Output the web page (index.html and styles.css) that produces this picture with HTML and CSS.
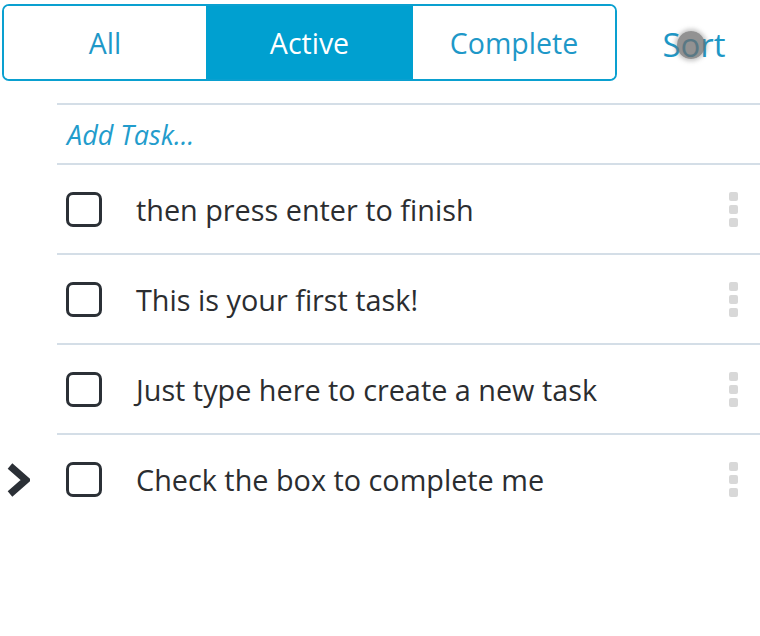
FILE: index.html
```html
<!DOCTYPE html>
<html lang="en">

<head>
    <meta charset="UTF-8">
    <meta name="viewport" content="width=device-width, initial-scale=1.0">
    <title>Tasks</title>
    <link rel="stylesheet" href="styles.css">
</head>

<body>

    <div class="toolbar">
        <div class="filter-group">
            <button class="filter">All</button>
            <button class="filter selected">Active</button>
            <button class="filter">Complete</button>
        </div>
        <div class="sort-wrap">
            <span class="sort">Sort</span>
            <span class="touch-dot"></span>
        </div>
    </div>

    <ul class="task-list">
        <li class="add-task">Add Task...</li>
        <li class="task">
            <span class="checkbox"></span>
            <span class="task-text">then press enter to finish</span>
            <span class="handle"><i></i><i></i><i></i></span>
        </li>
        <li class="task">
            <span class="checkbox"></span>
            <span class="task-text">This is your first task!</span>
            <span class="handle"><i></i><i></i><i></i></span>
        </li>
        <li class="task">
            <span class="checkbox"></span>
            <span class="task-text">Just type here to create a new task</span>
            <span class="handle"><i></i><i></i><i></i></span>
        </li>
        <li class="task current">
            <svg class="pointer" width="24" height="36" viewBox="0 0 24 36">
                <path d="M4 4 L20 18 L4 32" fill="none" stroke="#2b3036" stroke-width="7" stroke-linejoin="miter" />
            </svg>
            <span class="checkbox"></span>
            <span class="task-text">Check the box to complete me</span>
            <span class="handle"><i></i><i></i><i></i></span>
        </li>
    </ul>

</body>

</html>
```

FILE: styles.css
```css
/* Global Styles */
body {
    font-family: 'Open Sans', 'Liberation Sans', sans-serif;
    background-color: #fff;
    margin: 0;
    padding: 0;
}

/* Toolbar */
.toolbar {
    display: flex;
    align-items: center;
    padding: 4px 0 0 2px;
}

.filter-group {
    display: flex;
    width: 615px;
    height: 77px;
    box-sizing: border-box;
    border: 2px solid #0aa0d0;
    border-radius: 7px;
    overflow: hidden;
}

.filter {
    flex: 1;
    border: none;
    background-color: #fff;
    color: #1e98c8;
    font-family: inherit;
    font-size: 28.5px;
    padding: 0;
    cursor: pointer;
}

.filter.selected {
    flex: 0 0 207px;
    background-color: #00a0d0;
    color: #fff;
}

.sort-wrap {
    flex: 1;
    position: relative;
    text-align: center;
    padding: 10px 0 0 11px;
    line-height: 45px;
}

.sort {
    font-size: 33px;
    color: #1d97c6;
}

.touch-dot {
    position: absolute;
    left: 60px;
    top: 19px;
    width: 28px;
    height: 28px;
    border-radius: 50%;
    background-color: rgba(110, 110, 110, 0.75);
    box-shadow: 0 0 4px 2px rgba(110, 110, 110, 0.4);
}

/* Task List */
.task-list {
    list-style: none;
    margin: 22px 0 0 57px;
    padding: 0;
    border-top: 2px solid #d4dee7;
}

.add-task {
    height: 58px;
    border-bottom: 2px solid #d4dee7;
    display: flex;
    align-items: center;
    padding-left: 10px;
    font-size: 27px;
    font-style: italic;
    color: #229ccc;
}

.task {
    position: relative;
    height: 88px;
    border-bottom: 2px solid #d4dee7;
    display: flex;
    align-items: center;
    padding-left: 9px;
    font-size: 28.8px;
    color: #2b2d30;
}

.task:last-child {
    border-bottom: none;
}

.checkbox {
    width: 36px;
    height: 35px;
    box-sizing: border-box;
    border: 3px solid #2b3036;
    border-radius: 7px;
    flex-shrink: 0;
}

.task-text {
    flex: 1;
    margin-left: 34px;
}

.handle {
    display: flex;
    flex-direction: column;
    gap: 4px;
    margin-right: 22px;
}

.handle i {
    display: block;
    width: 9px;
    height: 9px;
    border-radius: 2px;
    background-color: #d8d8d8;
}

.pointer {
    position: absolute;
    left: -51px;
    top: 27px;
}
```
